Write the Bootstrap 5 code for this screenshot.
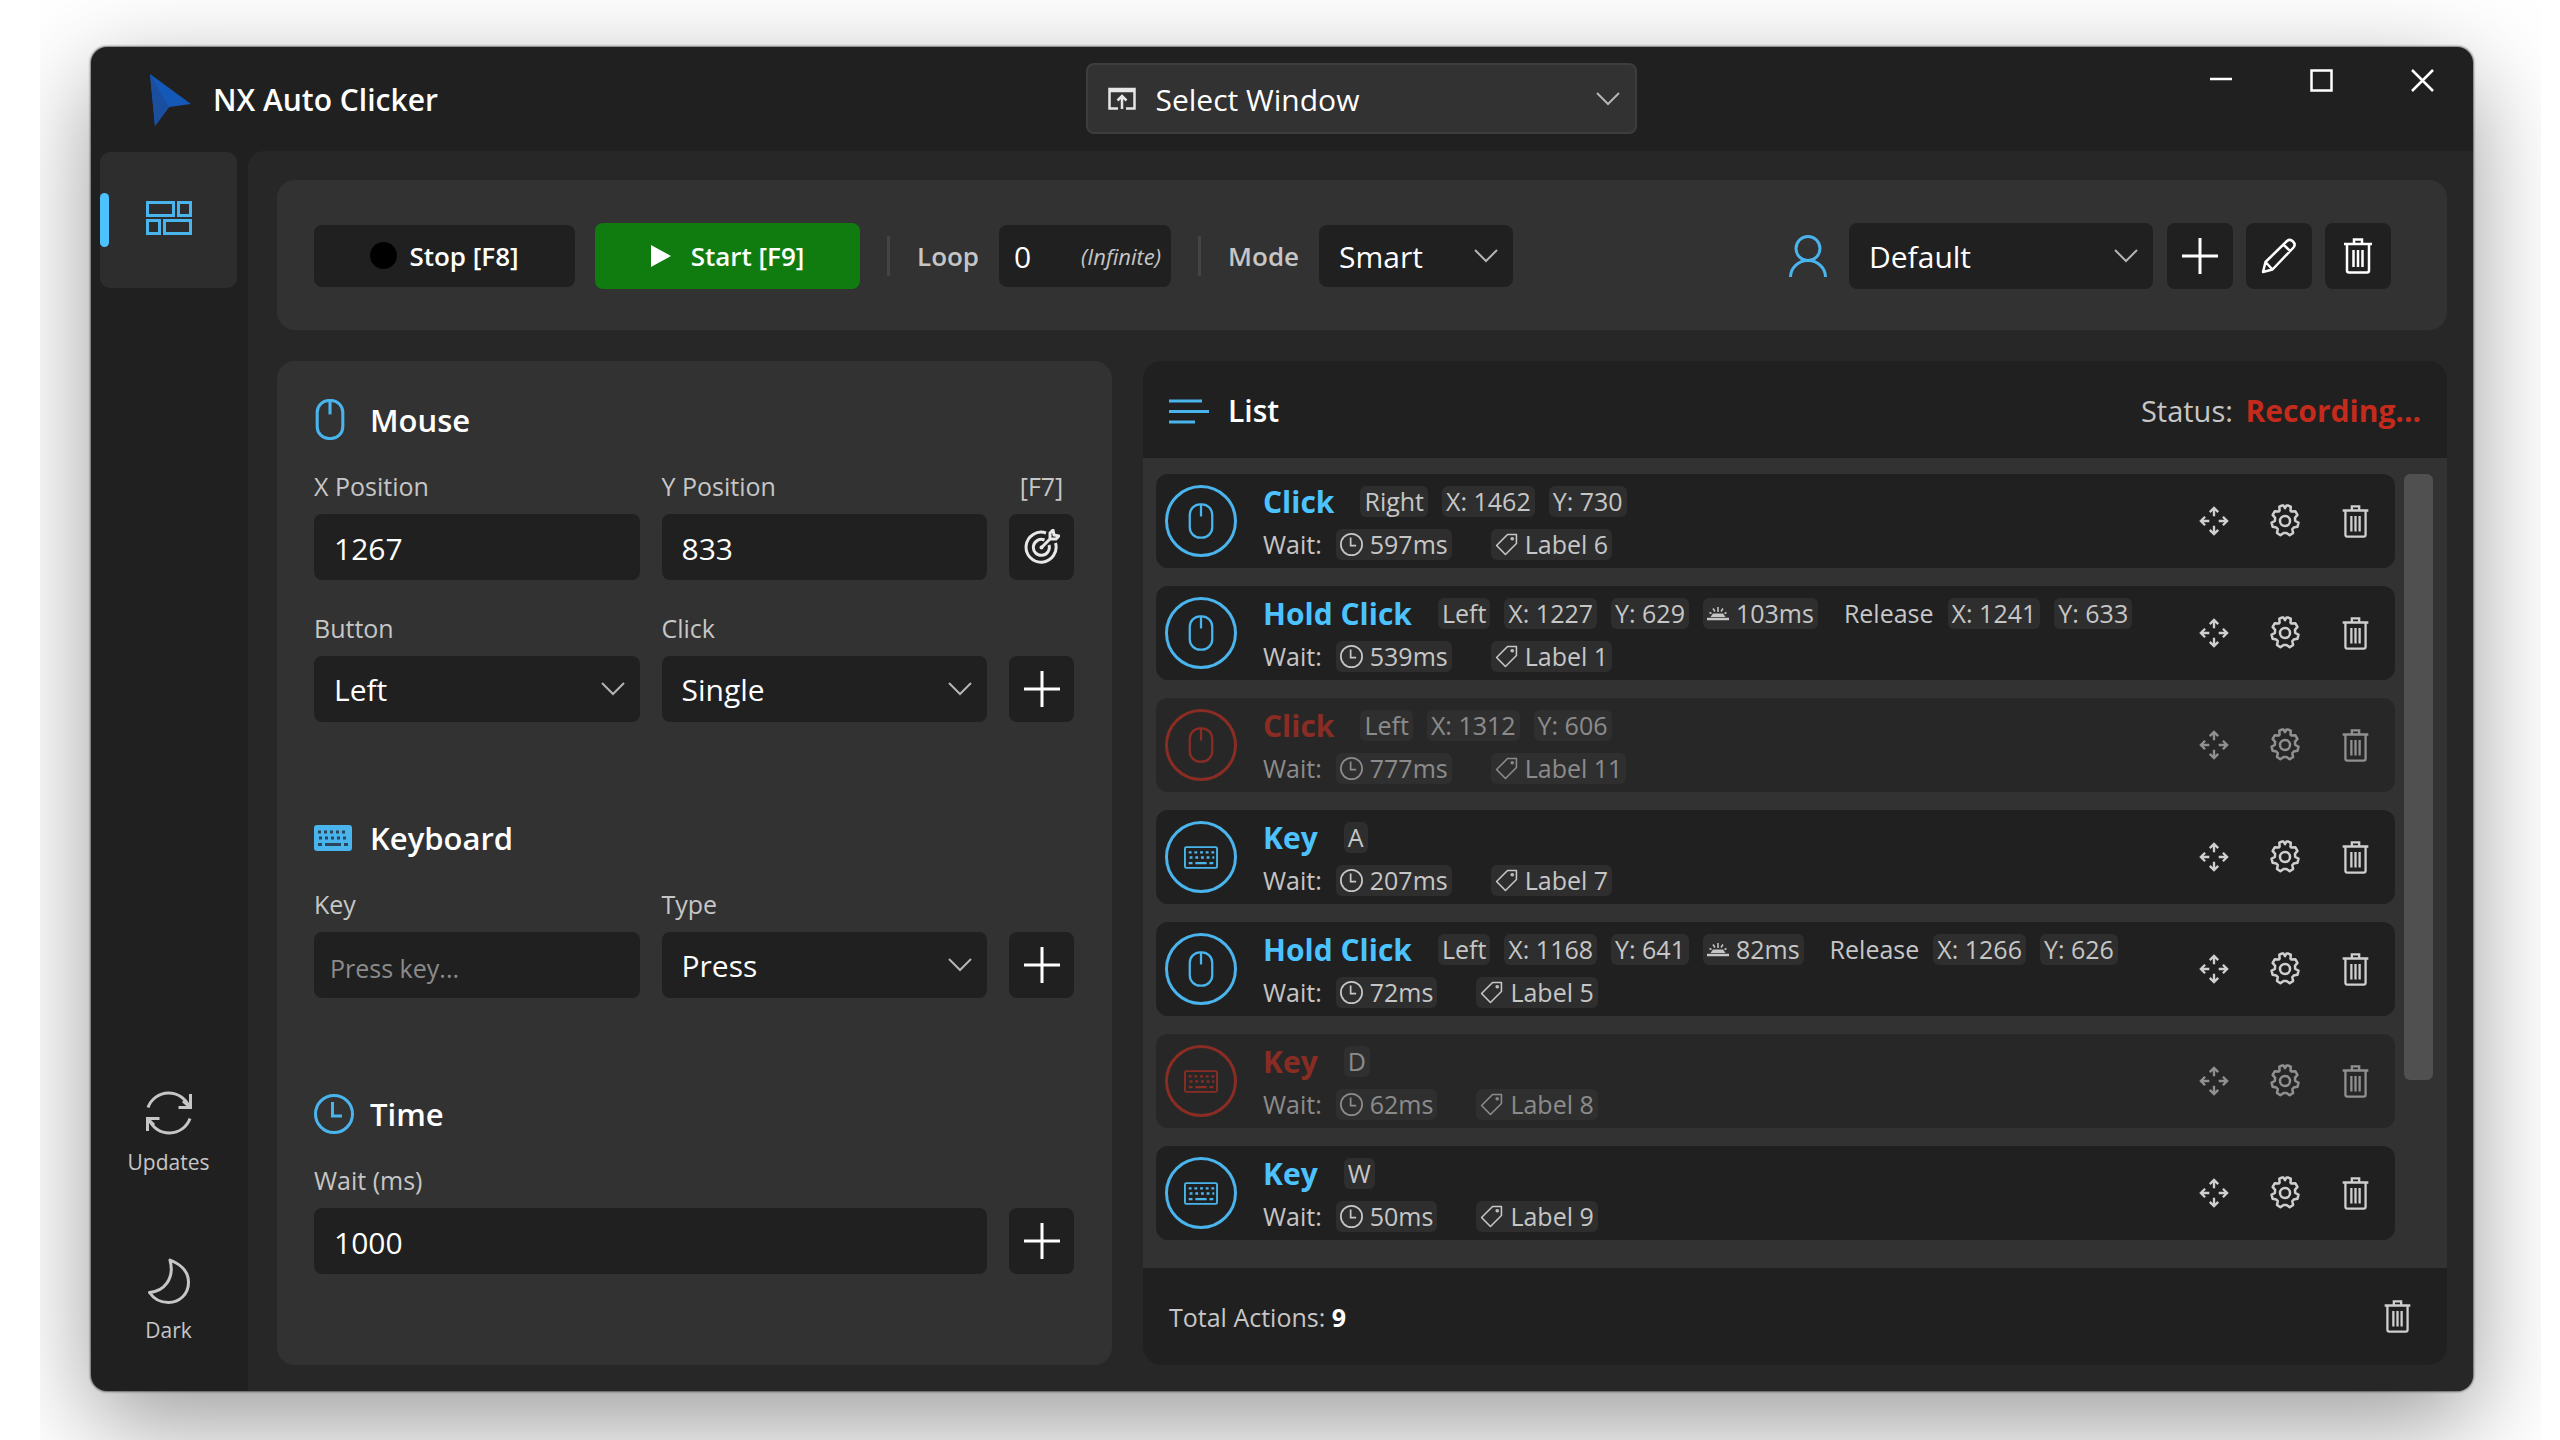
<!DOCTYPE html>
<html lang="en" data-bs-theme="dark">
<head>
<meta charset="utf-8">
<meta name="viewport" content="width=device-width, initial-scale=1">
<title>NX Auto Clicker</title>
<link href="https://cdn.jsdelivr.net/npm/bootstrap@5.3.0/dist/css/bootstrap.min.css" rel="stylesheet">
<style>
:root{--ink:#202020;--base:#272727;--panel:#323232;--soft:#c6c6c6;--accent:#4cc2ff;--danger:#c42b1c}
body{background:#fff;color:#fff;font-family:"Open Sans","Noto Sans",sans-serif;font-size:30px;line-height:40px}
svg{display:block;flex:none;fill:none;stroke:currentColor}
.stage{min-height:100vh;margin:0 19px 0 40px;padding:47px 68px 49px 51px;overflow:hidden}
.app-window{background:var(--ink);border-radius:16px;overflow:hidden;box-shadow:0 0 2px 1px rgba(0,0,0,.5)}
.app-shadow{border-radius:16px;box-shadow:0 32px 100px rgba(0,0,0,.4)}
.title-bar{display:grid;grid-template-columns:158px 1fr 551px 1fr;height:104px}
.brand{grid-column:1/3;padding:2px 0 0 59px;font-size:30px;font-weight:600}
.brand svg{width:41px;height:52px;stroke:none;margin-right:22px}
.win-btn{width:101px;height:66px;background:none;border:0;color:#fff}
.side{width:157px;padding:1px 0 22px}
.side-link{width:137px;height:136px;margin-left:9px;border-radius:10px;color:var(--soft);font-size:21px;line-height:28px;text-decoration:none;position:relative}
.side-link.active{background:#2d2d2d;color:#4ab4ec}
.side-link.active::before{content:"";position:absolute;left:0;top:41px;width:9px;height:54px;border-radius:5px;background:var(--accent)}
.main-area{background:var(--base);border-top-left-radius:16px;padding:29px 26px 26px 29px;gap:31px}
.panel{background:var(--panel);border-radius:18px}
.tool-bar{height:150px;padding:1px 56px 0 37px}
.tool-group{gap:20px}
.field,.key-btn{background-color:var(--ink);border:0;border-radius:8px;color:#fff;height:66px;font-size:30px;line-height:40px}
.field{padding:2px 20px 0;width:100%;min-width:0}
.field:focus{background-color:var(--ink);color:#fff}
.field::placeholder{color:#8b8b8b;opacity:1;font-size:25px}
.field.form-select{--bs-form-select-bg-img:url("data:image/svg+xml,%3csvg xmlns='http://www.w3.org/2000/svg' viewBox='0 0 24 14'%3e%3cpath fill='none' stroke='%23b4b4b4' stroke-width='2' d='M1 1l11 11L23 1'/%3e%3c/svg%3e");background-size:24px 14px;background-position:right 15px center;padding-right:44px}
.low{height:62px}
.key-field{padding-left:16px}
.key-btn{width:66px;display:flex;align-items:center;justify-content:center;padding:0;flex:none}
.run-btn{border:0;border-radius:8px;font-size:26px;font-weight:600;color:#fff;line-height:36px;gap:12px}
.stop{background:var(--ink);width:261px;height:62px}
.start{background:#107c10;width:265px;height:66px;gap:20px}
.divider{width:3px;height:40px;margin:0 7px;background:#444}
.bar-label{color:var(--soft);font-size:26px;font-weight:600}
.hint{position:absolute;right:10px;top:17px;font-size:22px;line-height:28px;font-style:italic;color:var(--soft);font-weight:400}
.loop-box{width:172px}
.loop-box .field{padding-left:15px}
.mode-box{width:194px}
.profile-box{width:304px;margin-left:22px}
.tool-set{gap:13px;margin-left:14px}
.target-wrap .field{height:71px;background-color:var(--panel);border:2px solid #3d3d3d;padding-left:68px}
.target-wrap svg{position:absolute;left:22px;top:24px;color:#e6e6e6}
.work{gap:31px}
.form-side{width:835px;padding:38px 38px 0 37px}
.group-title{font-size:31px;font-weight:600;line-height:40px;margin-bottom:30px}
.group-icon{width:56px;color:#4ab4ec}
.form-section{margin-bottom:96px}
.cap{display:block;color:var(--soft);font-size:25px;line-height:32px;margin-bottom:12px}
.fields{display:grid;grid-template-columns:1fr 1fr 65px;column-gap:22px;row-gap:32px;align-items:end}
.fields .key-btn{width:65px}
.wait-fields{grid-template-columns:1fr 65px}
.list-head,.list-foot{background:var(--ink);height:97px;padding:0 26px}
.list-head{border-radius:18px 18px 0 0;padding-top:3px}
.list-name{gap:19px;font-size:30px;font-weight:600}
.status-text{font-size:29px;color:var(--soft)}
.status-text b{color:var(--danger);font-size:30px;margin-left:5px}
.list-foot{border-radius:0 0 18px 18px;font-size:25px;color:var(--soft)}
.foot-trash{margin-right:-12px}
.list-scroll{padding:16px 14px 28px 13px;gap:9px}
.rows{gap:18px}
.action-row{background:var(--ink);border-radius:12px;height:94px;padding:0 4px 0 9px}
.action-row.off{opacity:.6}
.action-row.off .disc,.action-row.off .kind{color:var(--danger)}
.disc{width:72px;height:72px;border:3px solid;border-radius:50%;color:#4ab4ec;margin-right:26px}
.kind{color:var(--accent);font-weight:700;font-size:30px;margin-right:12px}
.lines{padding-top:3px;gap:12px;font-size:25px;color:var(--soft)}
.line{line-height:31px;height:31px;gap:14px}
.chip{background:#2e2e2e;border-radius:6px;padding:0 4px;height:31px;display:flex;align-items:center;gap:7px}
.tag-chip{margin-left:25px}
.rel{margin-left:12px}
.icon-btn{width:71px;height:60px;background:none;border:0;padding:0;color:#cfcfcf;display:flex;align-items:center;justify-content:center}
.thumb{width:29px;height:606px;border-radius:6px;background:#505050}
</style>
</head>
<body>
<svg width="0" height="0" class="position-absolute" aria-hidden="true">
<defs>
<symbol id="i-mouse" viewBox="0 0 28 40"><rect x="1.5" y="1.5" width="25" height="37" rx="11.5"/><path d="M14 2v13"/></symbol>
<symbol id="i-keys" viewBox="0 0 36 24"><rect x="1" y="1" width="34" height="22" rx="1.500"/><path d="M5 6.500h3m3 0h3m3 0h3m3 0h3m3 0h3M6 12h3m3 0h3m3 0h3m3 0h3m3 0h2M5 18h4m3 0h12m3 0h4" stroke-width="2.500"/></symbol>
<symbol id="i-clock" viewBox="0 0 40 40"><circle cx="20" cy="20" r="18.500"/><path d="M18.500 8v14H28"/></symbol>
<symbol id="i-plus" viewBox="0 0 36 36"><path d="M18 0v36M0 18h36"/></symbol>
<symbol id="i-trash" viewBox="0 0 28 36"><path d="M0 6h28M10 6V1.500h8V6M3 6v26.500q0 2 2 2h18q2 0 2-2V6M9.500 12v17M14 12v17M18.500 12v17"/></symbol>
<symbol id="i-tag" viewBox="0 0 22 22"><path d="M12 1.500h8.500V10L10 20.500 1.500 12z" stroke-linejoin="round"/><circle cx="16.500" cy="5.500" r="1"/></symbol>
<symbol id="i-move" viewBox="0 0 32 32"><path d="M16 11V2M11.500 6.500 16 2l4.500 4.500M16 21v9M11.500 25.500 16 30l4.500-4.500M11 16H2M6.500 11.500 2 16l4.500 4.500M21 16h9M25.500 11.500 30 16l-4.500 4.500"/></symbol>
<symbol id="i-gear" viewBox="0 0 34 34"><path d="M14.200 1.500h1.300l1.500 2.700 1.500-2.700h1.300l3 1.200-.3 4 .9.900 4-.3 2 3.600-2.400 3 .2 3.100 3.300 1.600-1 4.200-3.800.7-1.400 1.700.8 3.700-3.400 2.400-3.200-2.400h-2.900l-3.200 2.400-3.400-2.400.8-3.700-1.500-1.700-3.700-.7-1-4.200 3.300-1.600.2-3.100-2.400-3 2-3.600 4 .3.900-.9-.3-4z" stroke-linejoin="round"/><circle cx="17" cy="17" r="5"/></symbol>
<symbol id="i-dawn" viewBox="0 0 22 16"><path d="M0 14h22" stroke-width="2.500"/><path d="M3.500 12 6 8.500h10L18.500 12z" fill="currentColor" stroke="none"/><path d="M11 2v5M6 3.500l2 3M16 3.500l-2 3M2.500 7.500l2 1M19.500 7.500l-2 1" stroke-width="1.500"/></symbol>
</defs>
</svg>

<div class="stage d-flex flex-column">
<div class="app-shadow d-flex flex-column flex-grow-1">
<div class="app-window d-flex flex-column flex-grow-1">

  <header class="title-bar">
    <div class="brand d-flex align-items-center">
      <svg viewBox="0 0 41 52"><path d="M0 0 41 30 19 33 5 52z" fill="#1559b8"/><path d="M0 0 19 33 5 52z" fill="#1a4fa0"/></svg>
      <span>NX Auto Clicker</span>
    </div>
    <div class="target-wrap position-relative mt-3">
      <select class="form-select field" aria-label="Target window"><option>Select Window</option></select>
      <svg width="28" height="24" viewBox="0 0 28 24" stroke-width="2.500"><path d="M10 21.500H1.500V2h25v19.500H18M1 4h26"/><path d="M14 22V10M9.500 13.500 14 9l4.500 4.500"/></svg>
    </div>
    <div class="d-flex justify-content-end">
      <button class="win-btn d-flex align-items-center justify-content-center" aria-label="Minimize"><svg width="22" height="22" viewBox="0 0 22 22" stroke-width="2.500"><path d="M0 10h22"/></svg></button>
      <button class="win-btn d-flex align-items-center justify-content-center" aria-label="Maximize"><svg width="23" height="23" viewBox="0 0 23 23" stroke-width="2.500"><path d="M1.500 1.500h20v20h-20z"/></svg></button>
      <button class="win-btn d-flex align-items-center justify-content-center" aria-label="Close"><svg width="23" height="23" viewBox="0 0 23 23" stroke-width="2.500"><path d="M1 1l21 21M22 1 1 22"/></svg></button>
    </div>
  </header>

  <div class="d-flex flex-grow-1">
    <nav class="side d-flex flex-column flex-shrink-0">
      <a href="#" class="side-link active d-flex align-items-center justify-content-center mb-auto pb-1" aria-label="Dashboard">
        <svg width="46" height="34" viewBox="0 0 46 34" stroke-width="3"><path d="M1.500 1.500h26v13h-26zM32.500 1.500h12v13h-12zM1.500 19.500h12v13h-12zM18.500 19.500h26v13h-26z"/></svg>
      </a>
      <a href="#" class="side-link d-flex flex-column align-items-center justify-content-center gap-2 mb-2">
        <svg class="mb-1" width="46" height="46" viewBox="0 0 46 46" stroke-width="3"><path d="M2 17.500a22 22 0 0 1 41-1M44.500 4v13.500H32.500M44 28.500a22 22 0 0 1-41 1M1.500 41V28.500h12M2 29l6 6M44 17l-7-6"/></svg>
        <span>Updates</span>
      </a>
      <a href="#" class="side-link d-flex flex-column align-items-center justify-content-center gap-2 mt-4">
        <svg class="mb-1" width="46" height="46" viewBox="0 0 46 46" stroke-width="3"><path d="M24 2c8 3.500 18.500 9 18.500 22.500 0 12-9.500 20-20 20-8 0-15-4-19-10C18 33 29 21 24 2z" stroke-linejoin="round"/></svg>
        <span>Dark</span>
      </a>
    </nav>

    <main class="main-area d-flex flex-column flex-grow-1">
      <section class="panel tool-bar d-flex align-items-center">
        <div class="tool-group d-flex align-items-center">
          <button class="run-btn stop d-flex align-items-center justify-content-center"><svg width="27" height="27" viewBox="0 0 27 27"><circle cx="13.500" cy="13.500" r="13.500" fill="#000" stroke="none"/></svg><span>Stop [F8]</span></button>
          <button class="run-btn start d-flex align-items-center justify-content-center"><svg width="20" height="22" viewBox="0 0 20 22"><path d="M0 0l20 11L0 22z" fill="#fff" stroke="none"/></svg><span>Start [F9]</span></button>
          <span class="divider"></span>
          <label class="bar-label" for="loop">Loop</label>
          <div class="position-relative loop-box">
            <input id="loop" class="form-control field low" value="0">
            <span class="hint">(Infinite)</span>
          </div>
          <span class="divider"></span>
          <label class="bar-label" for="mode">Mode</label>
          <div class="mode-box"><select id="mode" class="form-select field low"><option>Smart</option></select></div>
        </div>
        <svg class="ms-auto" width="38" height="42" viewBox="0 0 38 42" stroke-width="3" color="#4ab4ec"><circle cx="19" cy="13.500" r="12"/><path d="M1.500 42a17.500 16.500 0 0 1 35 0"/></svg>
        <div class="profile-box"><select class="form-select field" aria-label="Profile"><option>Default</option></select></div>
        <div class="d-flex tool-set">
          <button class="key-btn" aria-label="Add profile"><svg width="36" height="36" stroke-width="3"><use href="#i-plus"/></svg></button>
          <button class="key-btn" aria-label="Edit profile"><svg width="36" height="36" viewBox="0 0 36 36" stroke-width="2.500"><path d="M2 34l2.500-10L26 3q3-2.500 6 .5t.5 6L11.500 31.500zM4.500 24l7 7.500M22.500 6.500l7 7" stroke-linejoin="round"/></svg></button>
          <button class="key-btn" aria-label="Delete profile"><svg width="28" height="36" stroke-width="2.500"><use href="#i-trash"/></svg></button>
        </div>
      </section>

      <div class="d-flex flex-grow-1 work">
        <section class="panel form-side flex-shrink-0">
          <div class="form-section">
            <h2 class="group-title d-flex align-items-center"><span class="group-icon"><svg width="32" height="41" stroke-width="3"><use href="#i-mouse"/></svg></span>Mouse</h2>
            <div class="fields">
              <div><label class="cap" for="xpos">X Position</label><input id="xpos" class="form-control field" value="1267"></div>
              <div><label class="cap" for="ypos">Y Position</label><input id="ypos" class="form-control field" value="833"></div>
              <div><label class="cap text-center" for="pick">[F7]</label><button id="pick" class="key-btn"><svg width="36" height="36" viewBox="0 0 36 36" stroke-width="3" color="#e8e8e8"><path d="M22 4A15 15 0 1 0 31.500 14M20.500 11A8 8 0 1 0 25 16M17.500 18.500l9-9M26 9.500V4l3-3 1 5 5 1-3 3h-6"/><circle cx="17.500" cy="18.500" r="2" fill="currentColor" stroke="none"/></svg></button></div>
              <div><label class="cap" for="btn-kind">Button</label><select id="btn-kind" class="form-select field"><option>Left</option></select></div>
              <div><label class="cap" for="click-kind">Click</label><select id="click-kind" class="form-select field"><option>Single</option></select></div>
              <button class="key-btn" aria-label="Add mouse action"><svg width="36" height="36" stroke-width="3"><use href="#i-plus"/></svg></button>
            </div>
          </div>
          <div class="form-section">
            <h2 class="group-title d-flex align-items-center"><span class="group-icon"><svg width="38" height="26" viewBox="0 0 38 26"><rect width="38" height="26" rx="3" fill="currentColor" stroke="none"/><path d="M4 7h3m3 0h3m3 0h3m3 0h3m3 0h3M5 13h3m3 0h3m3 0h3m3 0h3m3 0h3M4 19.500h4m3 0h16m3 0h4" stroke="#2a4658" stroke-width="3"/></svg></span>Keyboard</h2>
            <div class="fields">
              <div><label class="cap" for="key-in">Key</label><input id="key-in" class="form-control field key-field" placeholder="Press key..."></div>
              <div><label class="cap" for="key-type">Type</label><select id="key-type" class="form-select field"><option>Press</option></select></div>
              <button class="key-btn" aria-label="Add key action"><svg width="36" height="36" stroke-width="3"><use href="#i-plus"/></svg></button>
            </div>
          </div>
          <div>
            <h2 class="group-title d-flex align-items-center"><span class="group-icon"><svg width="40" height="40" stroke-width="3"><use href="#i-clock"/></svg></span>Time</h2>
            <div class="fields wait-fields">
              <div><label class="cap" for="wait">Wait (ms)</label><input id="wait" class="form-control field" value="1000"></div>
              <button class="key-btn" aria-label="Add wait"><svg width="36" height="36" stroke-width="3"><use href="#i-plus"/></svg></button>
            </div>
          </div>
        </section>

        <section class="panel d-flex flex-column flex-grow-1">
          <div class="list-head d-flex align-items-center justify-content-between">
            <div class="d-flex align-items-center list-name"><svg width="40" height="25" viewBox="0 0 40 25" stroke-width="3" color="#4ab4ec"><path d="M0 2h33M0 12.500h40M0 23h26"/></svg><span>List</span></div>
            <div class="status-text">Status: <b>Recording...</b></div>
          </div>
          <div class="list-scroll d-flex flex-grow-1">
            <div class="rows d-flex flex-column flex-grow-1">

              <div class="action-row d-flex align-items-center">
                <div class="disc d-flex align-items-center justify-content-center"><svg width="26" height="36" stroke-width="2.500"><use href="#i-mouse"/></svg></div>
                <div class="lines d-flex flex-column">
                  <div class="line d-flex"><span class="kind">Click</span><span class="chip">Right</span><span class="chip">X: 1462</span><span class="chip">Y: 730</span></div>
                  <div class="line d-flex"><span>Wait:</span><span class="chip"><svg width="23" height="23" stroke-width="3"><use href="#i-clock"/></svg>597ms</span><span class="chip tag-chip"><svg width="23" height="23" stroke-width="1.500"><use href="#i-tag"/></svg>Label 6</span></div>
                </div>
                <div class="d-flex ms-auto"><button class="icon-btn" aria-label="Move"><svg width="30" height="30" stroke-width="2.500"><use href="#i-move"/></svg></button><button class="icon-btn" aria-label="Settings"><svg width="34" height="34" stroke-width="2.500"><use href="#i-gear"/></svg></button><button class="icon-btn" aria-label="Delete"><svg width="27" height="33" stroke-width="2.500"><use href="#i-trash"/></svg></button></div>
              </div>

              <div class="action-row d-flex align-items-center">
                <div class="disc d-flex align-items-center justify-content-center"><svg width="26" height="36" stroke-width="2.500"><use href="#i-mouse"/></svg></div>
                <div class="lines d-flex flex-column">
                  <div class="line d-flex"><span class="kind">Hold Click</span><span class="chip">Left</span><span class="chip">X: 1227</span><span class="chip">Y: 629</span><span class="chip"><svg width="22" height="16" stroke-width="2"><use href="#i-dawn"/></svg>103ms</span><span class="rel">Release</span><span class="chip">X: 1241</span><span class="chip">Y: 633</span></div>
                  <div class="line d-flex"><span>Wait:</span><span class="chip"><svg width="23" height="23" stroke-width="3"><use href="#i-clock"/></svg>539ms</span><span class="chip tag-chip"><svg width="23" height="23" stroke-width="1.500"><use href="#i-tag"/></svg>Label 1</span></div>
                </div>
                <div class="d-flex ms-auto"><button class="icon-btn" aria-label="Move"><svg width="30" height="30" stroke-width="2.500"><use href="#i-move"/></svg></button><button class="icon-btn" aria-label="Settings"><svg width="34" height="34" stroke-width="2.500"><use href="#i-gear"/></svg></button><button class="icon-btn" aria-label="Delete"><svg width="27" height="33" stroke-width="2.500"><use href="#i-trash"/></svg></button></div>
              </div>

              <div class="action-row off d-flex align-items-center">
                <div class="disc d-flex align-items-center justify-content-center"><svg width="26" height="36" stroke-width="2.500"><use href="#i-mouse"/></svg></div>
                <div class="lines d-flex flex-column">
                  <div class="line d-flex"><span class="kind">Click</span><span class="chip">Left</span><span class="chip">X: 1312</span><span class="chip">Y: 606</span></div>
                  <div class="line d-flex"><span>Wait:</span><span class="chip"><svg width="23" height="23" stroke-width="3"><use href="#i-clock"/></svg>777ms</span><span class="chip tag-chip"><svg width="23" height="23" stroke-width="1.500"><use href="#i-tag"/></svg>Label 11</span></div>
                </div>
                <div class="d-flex ms-auto"><button class="icon-btn" aria-label="Move"><svg width="30" height="30" stroke-width="2.500"><use href="#i-move"/></svg></button><button class="icon-btn" aria-label="Settings"><svg width="34" height="34" stroke-width="2.500"><use href="#i-gear"/></svg></button><button class="icon-btn" aria-label="Delete"><svg width="27" height="33" stroke-width="2.500"><use href="#i-trash"/></svg></button></div>
              </div>

              <div class="action-row d-flex align-items-center">
                <div class="disc d-flex align-items-center justify-content-center"><svg width="34" height="23" stroke-width="2"><use href="#i-keys"/></svg></div>
                <div class="lines d-flex flex-column">
                  <div class="line d-flex"><span class="kind">Key</span><span class="chip">A</span></div>
                  <div class="line d-flex"><span>Wait:</span><span class="chip"><svg width="23" height="23" stroke-width="3"><use href="#i-clock"/></svg>207ms</span><span class="chip tag-chip"><svg width="23" height="23" stroke-width="1.500"><use href="#i-tag"/></svg>Label 7</span></div>
                </div>
                <div class="d-flex ms-auto"><button class="icon-btn" aria-label="Move"><svg width="30" height="30" stroke-width="2.500"><use href="#i-move"/></svg></button><button class="icon-btn" aria-label="Settings"><svg width="34" height="34" stroke-width="2.500"><use href="#i-gear"/></svg></button><button class="icon-btn" aria-label="Delete"><svg width="27" height="33" stroke-width="2.500"><use href="#i-trash"/></svg></button></div>
              </div>

              <div class="action-row d-flex align-items-center">
                <div class="disc d-flex align-items-center justify-content-center"><svg width="26" height="36" stroke-width="2.500"><use href="#i-mouse"/></svg></div>
                <div class="lines d-flex flex-column">
                  <div class="line d-flex"><span class="kind">Hold Click</span><span class="chip">Left</span><span class="chip">X: 1168</span><span class="chip">Y: 641</span><span class="chip"><svg width="22" height="16" stroke-width="2"><use href="#i-dawn"/></svg>82ms</span><span class="rel">Release</span><span class="chip">X: 1266</span><span class="chip">Y: 626</span></div>
                  <div class="line d-flex"><span>Wait:</span><span class="chip"><svg width="23" height="23" stroke-width="3"><use href="#i-clock"/></svg>72ms</span><span class="chip tag-chip"><svg width="23" height="23" stroke-width="1.500"><use href="#i-tag"/></svg>Label 5</span></div>
                </div>
                <div class="d-flex ms-auto"><button class="icon-btn" aria-label="Move"><svg width="30" height="30" stroke-width="2.500"><use href="#i-move"/></svg></button><button class="icon-btn" aria-label="Settings"><svg width="34" height="34" stroke-width="2.500"><use href="#i-gear"/></svg></button><button class="icon-btn" aria-label="Delete"><svg width="27" height="33" stroke-width="2.500"><use href="#i-trash"/></svg></button></div>
              </div>

              <div class="action-row off d-flex align-items-center">
                <div class="disc d-flex align-items-center justify-content-center"><svg width="34" height="23" stroke-width="2"><use href="#i-keys"/></svg></div>
                <div class="lines d-flex flex-column">
                  <div class="line d-flex"><span class="kind">Key</span><span class="chip">D</span></div>
                  <div class="line d-flex"><span>Wait:</span><span class="chip"><svg width="23" height="23" stroke-width="3"><use href="#i-clock"/></svg>62ms</span><span class="chip tag-chip"><svg width="23" height="23" stroke-width="1.500"><use href="#i-tag"/></svg>Label 8</span></div>
                </div>
                <div class="d-flex ms-auto"><button class="icon-btn" aria-label="Move"><svg width="30" height="30" stroke-width="2.500"><use href="#i-move"/></svg></button><button class="icon-btn" aria-label="Settings"><svg width="34" height="34" stroke-width="2.500"><use href="#i-gear"/></svg></button><button class="icon-btn" aria-label="Delete"><svg width="27" height="33" stroke-width="2.500"><use href="#i-trash"/></svg></button></div>
              </div>

              <div class="action-row d-flex align-items-center">
                <div class="disc d-flex align-items-center justify-content-center"><svg width="34" height="23" stroke-width="2"><use href="#i-keys"/></svg></div>
                <div class="lines d-flex flex-column">
                  <div class="line d-flex"><span class="kind">Key</span><span class="chip">W</span></div>
                  <div class="line d-flex"><span>Wait:</span><span class="chip"><svg width="23" height="23" stroke-width="3"><use href="#i-clock"/></svg>50ms</span><span class="chip tag-chip"><svg width="23" height="23" stroke-width="1.500"><use href="#i-tag"/></svg>Label 9</span></div>
                </div>
                <div class="d-flex ms-auto"><button class="icon-btn" aria-label="Move"><svg width="30" height="30" stroke-width="2.500"><use href="#i-move"/></svg></button><button class="icon-btn" aria-label="Settings"><svg width="34" height="34" stroke-width="2.500"><use href="#i-gear"/></svg></button><button class="icon-btn" aria-label="Delete"><svg width="27" height="33" stroke-width="2.500"><use href="#i-trash"/></svg></button></div>
              </div>

            </div>
            <div class="thumb flex-shrink-0"></div>
          </div>
          <div class="list-foot d-flex align-items-center justify-content-between">
            <div>Total Actions: <b class="text-white">9</b></div>
            <button class="icon-btn foot-trash" aria-label="Delete all"><svg width="27" height="33" stroke-width="2.500"><use href="#i-trash"/></svg></button>
          </div>
        </section>
      </div>
    </main>
  </div>
</div>
</div>
</div>
<script src="https://cdn.jsdelivr.net/npm/bootstrap@5.3.0/dist/js/bootstrap.bundle.min.js"></script>
</body>
</html>
